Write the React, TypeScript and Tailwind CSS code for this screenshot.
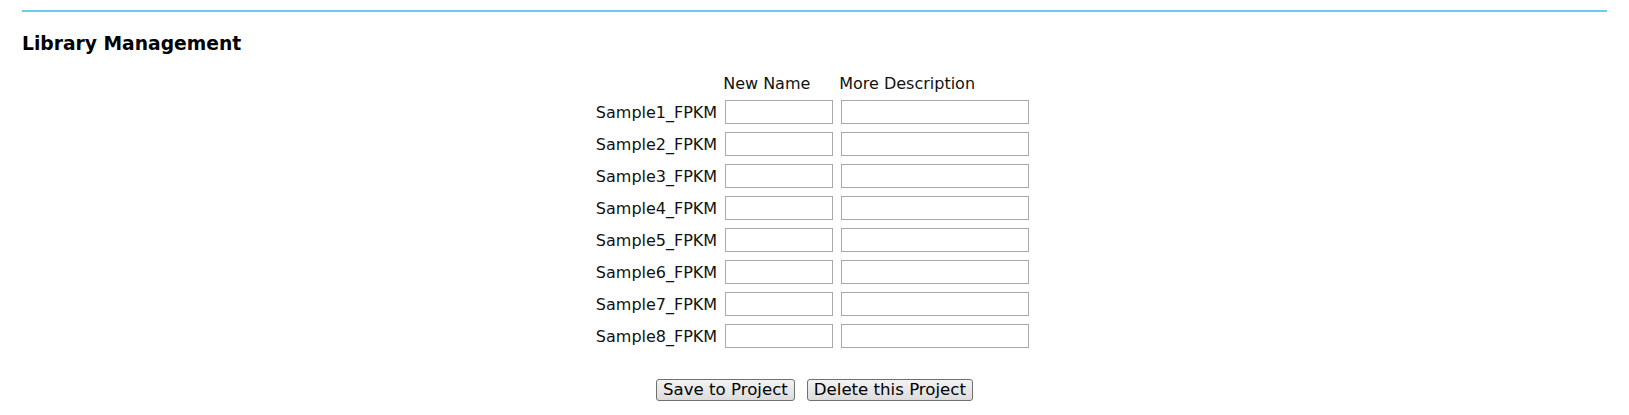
import React from "react";

const samples = [
  "Sample1_FPKM",
  "Sample2_FPKM",
  "Sample3_FPKM",
  "Sample4_FPKM",
  "Sample5_FPKM",
  "Sample6_FPKM",
  "Sample7_FPKM",
  "Sample8_FPKM",
];

export default function App() {
  return (
    <div className="min-h-[415px] bg-white px-[22px] pt-[10px] font-['DejaVu_Sans',sans-serif] text-[#111]">
      {/* top rule */}
      <div className="h-[2px] bg-[#72c8ec]" />

      <h3 className="mt-[21px] text-[18.72px] font-bold leading-[22px] text-black">Library Management</h3>

      {/* library table */}
      <div className="mt-[21px] flex justify-center pr-[4px]">
        <div className="grid grid-cols-[auto_108px_188px] items-center gap-x-2 gap-y-2 text-[16px]">
          <div />
          <div className="-ml-[2px] leading-[16px]">New Name</div>
          <div className="-ml-[2px] leading-[16px]">More Description</div>

          {samples.map((s) => (
            <React.Fragment key={s}>
              <div className="text-right leading-[19px]">{s}</div>
              <input
                type="text"
                className="h-[24px] w-[108px] border border-[#a9a9a9] bg-white px-1 text-[13px] outline-none"
              />
              <input
                type="text"
                className="h-[24px] w-[188px] border border-[#a9a9a9] bg-white px-1 text-[13px] outline-none"
              />
            </React.Fragment>
          ))}
        </div>
      </div>

      {/* actions */}
      <div className="mt-[31px] flex justify-center gap-[12px]">
        <button className="h-[22px] rounded-[3px] border border-[#707070] bg-gradient-to-b from-[#f3f3f3] to-[#dcdcdc] px-[6px] text-[16.6px] leading-[18px] text-black">
          Save to Project
        </button>
        <button className="h-[22px] rounded-[3px] border border-[#707070] bg-gradient-to-b from-[#f3f3f3] to-[#dcdcdc] px-[6px] text-[16.6px] leading-[18px] text-black">
          Delete this Project
        </button>
      </div>
    </div>
  );
}
